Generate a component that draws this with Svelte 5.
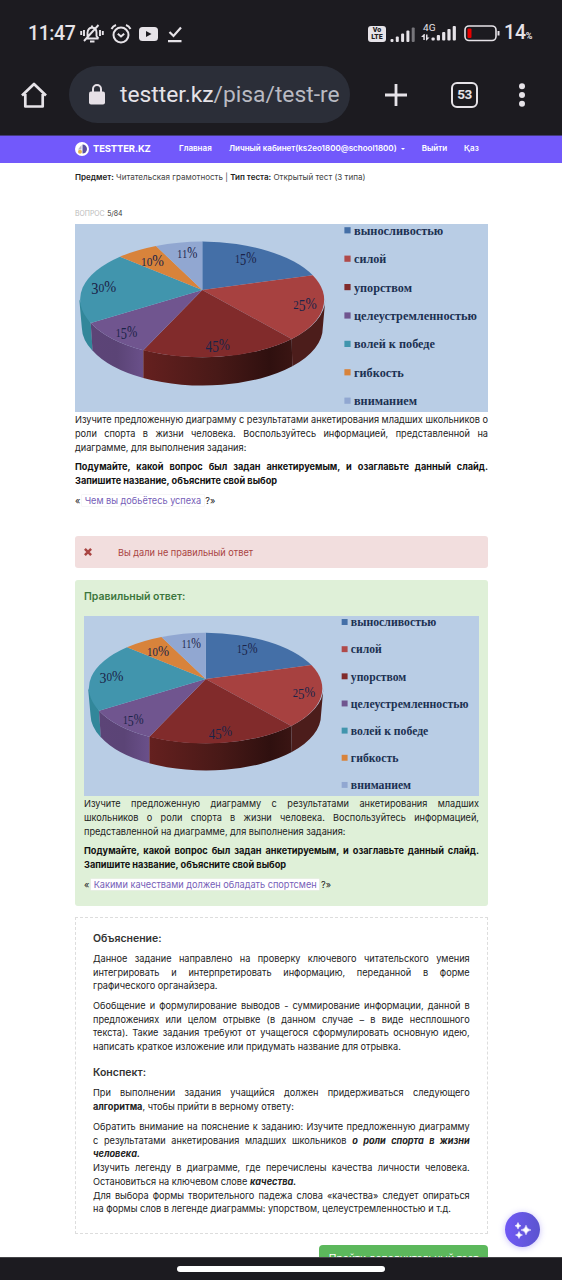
<script>
  const slices = [
    { d: 'M127.3 66V17.6A123 58 0 0 1 237.7 51.3Z', fill: '#446fa7' },
    { d: 'M127.3 66L237.7 51.3A123 58 0 0 1 216.7 115Z', fill: '#a74140' },
    { d: 'M127.3 66L216.7 115A123 58 0 0 1 68.3 126.3Z', fill: '#812b2b' },
    { d: 'M127.3 66L68.3 126.3A123 58 0 0 1 15.7 99Z', fill: '#70558f' },
    { d: 'M127.3 66L15.7 99A123 58 0 0 1 45 32.7Z', fill: '#4195ad' },
    { d: 'M127.3 66L45 32.7A123 58 0 0 1 81 22Z', fill: '#d8833b' },
    { d: 'M127.3 66L81 22A123 58 0 0 1 127.3 17.6Z', fill: '#91a7d1' }
  ];
  const shares = [
    { t: '15', x: 160, y: 38.7, w: 21.5 },
    { t: '25', x: 218.3, y: 84.7, w: 23.5 },
    { t: '45', x: 130.5, y: 126, w: 24.5 },
    { t: '15', x: 40.7, y: 112.7, w: 21.5 },
    { t: '30', x: 16.3, y: 67.7, w: 25 },
    { t: '10', x: 66, y: 41.7, w: 23 },
    { t: '11', x: 102.3, y: 34, w: 20 }
  ];
  const legend = [
    { t: 'выносливостью', w: 89.3, c: '#446fa7' },
    { t: 'силой', w: 32.3, c: '#b04a4a' },
    { t: 'упорством', w: 58, c: '#812b2b' },
    { t: 'целеустремленностью', w: 123, c: '#70558f' },
    { t: 'волей к победе', w: 81, c: '#4195ad' },
    { t: 'гибкость', w: 49.7, c: '#d8833b' },
    { t: 'вниманием', w: 63, c: '#91a7d1' }
  ];
  // Old-style figures: 0-2 sit at x-height, 3-5 hang under the baseline.
  const low = (c) => '345'.includes(c);
  const drop = (t, i) => (low(t[i]) ? 2.5 : 0) - (i > 0 && low(t[i - 1]) ? 2.5 : 0);
  const bars = [3, 5.5, 8.5, 11.5, 14.5];
</script>

{#snippet chart()}
  <svg class="chart" viewBox="0 0 413 188.6" preserveAspectRatio="none">
    <defs>
      <linearGradient id="side" x1="68" x2="217" y1="0" y2="0" gradientUnits="userSpaceOnUse">
        <stop offset="0" stop-color="#65201f" /><stop offset=".5" stop-color="#481917" /><stop offset=".85" stop-color="#2f100f" /><stop offset="1" stop-color="#3a1513" />
      </linearGradient>
      <linearGradient id="violet"><stop offset="0" stop-color="#5c4477" /><stop offset=".5" stop-color="#5b4476" /><stop offset="1" stop-color="#6a508a" /></linearGradient>
    </defs>
    <rect width="413" height="188.6" fill="#b9cde5" />
    <path d="M4.3 75.6L6.8 103.5A120.4 58 0 0 0 17.7 127L15.7 99Z" fill="#32879a" />
    <path d="M15.7 99L17.5 126.5A120.4 58 0 0 0 68.3 154V126.3A123 58 0 0 1 15.7 99Z" fill="url(#violet)" />
    <path d="M68.3 126V154A120.4 58 0 0 0 217.3 142.3L216.7 115A123 58 0 0 1 68.3 126Z" fill="url(#side)" />
    <path d="M216.7 115L217.3 142.3A120.4 58 0 0 0 247.8 103.5L250.3 75.6A123 58 0 0 1 216.7 115Z" fill="#4c1d1b" />
    {#each slices as s}<path d={s.d} fill={s.fill} />{/each}
    {#each shares as s}
      <text class="share" x={s.x} y={s.y} textLength={s.w} lengthAdjust="spacingAndGlyphs"><tspan dy={drop(s.t, 0)} class:small={!low(s.t[0])}>{s.t[0]}</tspan><tspan dy={drop(s.t, 1)} class:small={!low(s.t[1])}>{s.t[1]}</tspan><tspan dy={low(s.t[1]) ? -2.5 : 0}>%</tspan></text>
    {/each}
    {#each legend as l, i}
      <rect x="269.4" y={3.2 + i * 28.4} width="6.2" height="6.2" fill={l.c} />
      <text class="leg" x="279" y={10.8 + i * 28.4} textLength={l.w} lengthAdjust="spacingAndGlyphs">{l.t}</text>
    {/each}
  </svg>
{/snippet}

<div class="screen">
  <header class="phone">
    <div class="status">
      <span class="time">11:47</span>
      <svg class="bell" width="24" height="20" viewBox="0 0 24 20" fill="none" stroke="#e6e3e8" stroke-width="1.9">
        <path d="M6 14.5H18.5M7.5 14V8.5Q8 4 12 3.5Q16.500 4 16.500 8.500V12L18.500 14.500M12 3.500V1.500M10 17.500H14.500M4 17L18.500 1M4 6V12M1.200 7V11M20 6V12M22.800 7V11" />
      </svg>
      <svg class="alarm" width="22" height="20" viewBox="0 0 22 20" fill="none" stroke="#e6e3e8" stroke-width="2">
        <circle cx="11" cy="11" r="7.5" /><path d="M1.500 5Q3 2 6 1M20.500 5Q19 2 16 1M7.800 9.800L11 12.500L14.200 9.800" />
      </svg>
      <svg class="tube" width="19" height="14" viewBox="0 0 19 14"><rect width="19" height="14" rx="3.500" fill="#e6e3e8" /><path d="M7 4L12.500 7L7 10Z" fill="#1c1b20" /></svg>
      <svg class="done" width="14" height="17" viewBox="0 0 14 17" fill="none" stroke="#e6e3e8" stroke-width="2.200"><path d="M1.500 6L5.500 10L13 1.500M0 15.200H13.500" /></svg>
      <span class="gap"></span>
      <span class="volte"><b>Vo</b><b>LTE</b></span>
      <svg class="sig" width="25" height="17" viewBox="0 0 25 17">
        {#each bars as h, i}<rect x={0.5 + i * 5.3} y={16 - h} width="3" height={h} rx="1" fill={i === 4 ? '#77767b' : '#e6e3e8'} />{/each}
      </svg>
      <svg class="net" width="36" height="20" viewBox="0 0 36 20" fill="#e6e3e8">
        <text x="2" y="8.200" textLength="12.500" lengthAdjust="spacingAndGlyphs">4G</text>
        <path d="M3 11L0 14H2.300V17H3.800V11ZM5.500 17.500L8.500 14.500H6.500V11.500H5V17.500Z" />
        {#each bars as h, i}<rect x={10.5 + i * 5.3} y={17.5 - h} width="3.200" height={h} rx="1" />{/each}
      </svg>
      <svg class="batt" width="36" height="17" viewBox="0 0 36 17"><rect x="1" y="1" width="31" height="14.500" rx="4" fill="none" stroke="#e6e3e8" stroke-width="1.600" /><rect x="3.500" y="3.500" width="4" height="9.500" rx="1" fill="#e80000" /><path d="M34.500 6V10.500" stroke="#e6e3e8" stroke-width="2" /></svg>
      <span class="pct">14<small>%</small></span>
    </div>
    <div class="tools">
      <svg class="home" width="28" height="28" viewBox="0 0 28 28" fill="none" stroke="#e6e3e8" stroke-width="2.700"><path d="M2 14.500L14 3L26 14.500M5.300 13V25.500H22.700V13" stroke-linejoin="round" /></svg>
      <div class="url">
        <svg width="16" height="21" viewBox="0 0 16 21"><rect y="7.500" width="16" height="13" rx="2" fill="#e6e0e6" /><path d="M4 8V5a4 4 0 0 1 8 0V8" fill="none" stroke="#e6e0e6" stroke-width="2" /></svg>
        <span>testter.kz<i>/pisa/test-re</i></span>
      </div>
      <svg class="plus" width="24" height="24" viewBox="0 0 24 24" stroke="#e6e3e8" stroke-width="2.800"><path d="M12 1V23M1 12H23" /></svg>
      <span class="tabs">53</span>
      <svg class="dots" width="8" height="24" viewBox="0 0 8 24" fill="#e6e3e8"><circle cx="4" cy="3.200" r="3" /><circle cx="4" cy="12" r="3" /><circle cx="4" cy="20.800" r="3" /></svg>
    </div>
  </header>

  <nav>
    <svg width="14" height="14" viewBox="0 0 14 14"><circle cx="7" cy="7" r="7" fill="#fff" /><path d="M7.500 2.500A4.500 4.500 0 0 1 7.500 11.500Z" fill="#5c50a4" /><path d="M6.500 3L3 7.500H6.500Z" fill="#b9b4c6" /><circle cx="5" cy="9.700" r="2" fill="#e5b54d" /></svg>
    <strong>TESTTER.KZ</strong>
    <span class="n1">Главная</span>
    <span class="n2">Личный кабинет(ks2eo1800@school1800)</span>
    <i class="caret"></i>
    <span class="n3">Выйти</span>
    <span class="n4">Қаз</span>
  </nav>

  <main>
    <p class="meta"><b>Предмет:</b> Читательская грамотность | <b>Тип теста:</b> Открытый тест (3 типа)</p>
    <p class="num"><span>ВОПРОС</span> 5/84</p>
    {@render chart()}
    <div class="text">
      <p><span class="j">Изучите предложенную диаграмму с результатами анкетирования младших школьников о</span><span class="j">роли спорта в жизни человека. Воспользуйтесь информацией, представленной на</span><span class="l">диаграмме, для выполнения задания:</span></p>
      <p class="bold"><span class="j">Подумайте, какой вопрос был задан анкетируемым, и озаглавьте данный слайд.</span><span class="l">Запишите название, объясните свой выбор</span></p>
      <p class="fill">« <em>Чем вы добьётесь успеха</em> ?»</p>
    </div>

    <div class="wrong">
      <svg width="8" height="8" viewBox="0 0 8 8" stroke="#a94442" stroke-width="2.500"><path d="M.9 .9L7.100 7.100M7.100 .9L.9 7.100" /></svg>
      <span>Вы дали не правильный ответ</span>
    </div>

    <section class="right">
      <h3>Правильный ответ:</h3>
      {@render chart()}
      <div class="text">
        <p><span class="j">Изучите предложенную диаграмму с результатами анкетирования младших</span><span class="j">школьников о роли спорта в жизни человека. Воспользуйтесь информацией,</span><span class="l">представленной на диаграмме, для выполнения задания:</span></p>
        <p class="bold"><span class="j">Подумайте, какой вопрос был задан анкетируемым, и озаглавьте данный слайд.</span><span class="l">Запишите название, объясните свой выбор</span></p>
        <p class="fill">« <em>Какими качествами должен обладать спортсмен</em> ?»</p>
      </div>
    </section>

    <section class="notes">
      <h4>Объяснение:</h4>
      <p><span class="j">Данное задание направлено на проверку ключевого читательского умения</span><span class="j">интегрировать и интерпретировать информацию, переданной в форме</span><span class="l">графического органайзера.</span></p>
      <p><span class="j">Обобщение и формулирование выводов - суммирование информации, данной в</span><span class="j">предложениях или целом отрывке (в данном случае – в виде несплошного</span><span class="j">текста). Такие задания требуют от учащегося сформулировать основную идею,</span><span class="l">написать краткое изложение или придумать название для отрывка.</span></p>
      <h4 class="second">Конспект:</h4>
      <p><span class="j">При выполнении задания учащийся должен придерживаться следующего</span><span class="l"><b>алгоритма</b>, чтобы прийти в верному ответу:</span></p>
      <p><span class="j">Обратить внимание на пояснение к заданию: Изучите предложенную диаграмму</span><span class="j">с результатами анкетирования младших школьников <b class="it">о роли спорта в жизни</b></span><span class="l"><b class="it">человека.</b></span><span class="j">Изучить легенду в диаграмме, где перечислены качества личности человека.</span><span class="l">Остановиться на ключевом слове <b class="it">качества.</b></span><span class="j">Для выбора формы творительного падежа слова «качества» следует опираться</span><span class="l">на формы слов в легенде диаграммы: упорством, целеустремленностью и т.д.</span></p>
    </section>
    <button>Пройти дополнительный тест</button>
  </main>

  <div class="fab"><svg width="18" height="18" viewBox="0 0 18 18" fill="#fff"><path d="M12 4.200Q12.700 8.300 17 9Q12.700 9.700 12 13.800Q11.300 9.700 7 9Q11.300 8.300 12 4.200ZM4 1.500Q4.500 4.300 7 4.800Q4.500 5.300 4 8.100Q3.500 5.300 1 4.800Q3.500 4.300 4 1.500ZM5 10.500Q5.500 13.500 8.500 14Q5.500 14.500 5 17.500Q4.500 14.500 1.500 14Q4.500 13.500 5 10.500Z" stroke="#fff" stroke-width=".5" /></svg></div>
  <footer><span></span></footer>
</div>

<style>
  :global(body) { margin: 0; background: #fff; }
  .screen { position: relative; width: 562px; height: 1280px; overflow: hidden; background: #fff; font-family: Inter, "Noto Sans", sans-serif; font-size: 9.18px; line-height: 13.75px; color: #222; display: flex; flex-direction: column; box-sizing: border-box; }
  .phone { height: 135px; background: #1c1b20; font-family: Roboto, sans-serif; letter-spacing: 0; color: #e6e3e8; flex: none; border-bottom: 1px solid #433a7d; box-sizing: content-box; }
  .status { display: flex; align-items: center; height: 24px; padding: 22px 27px 0 28px; }
  .time { font-size: 19.500px; width: 52px; letter-spacing: -.4px; white-space: nowrap; font-weight: 500; line-height: 24px; }
  .alarm { margin-left: 6px; }
  .tube { margin-left: 7px; }
  .done { margin-left: 10px; }
  .gap { flex: 1; }
  .volte { width: 18px; height: 16px; border-radius: 3px; background: #e6e3e8; color: #1c1b20; display: flex; flex-direction: column; align-items: center; justify-content: center; font: 900 7px/6.5px Roboto, sans-serif; margin-top: -1px; }
  .volte b { font-weight: 900; }
  .sig { margin-left: 4px; }
  .net { margin-left: 6px; overflow: visible; margin-top: -2px; }
  .net text { font: 9.500px Roboto, sans-serif; }
  .batt { margin-left: 7px; margin-top: -1px; }
  .pct { font-size: 19.500px; line-height: 24px; font-weight: 500; margin-left: 4px; width: 31px; letter-spacing: -.2px; white-space: nowrap; }
  .pct small { font-size: 9px; font-weight: 700; }
  .tools { display: flex; align-items: center; height: 57px; padding: 20px 36px 0 20px; }
  .url { margin-left: 21px; width: 281px; height: 57px; border-radius: 29px; background: #2b2e38; box-sizing: border-box; padding-left: 20px; display: flex; align-items: center; flex: none; }
  .url svg { flex: none; }
  .url span { font-size: 22.800px; line-height: 30px; margin-left: 15px; white-space: nowrap; }
  .url i { font-style: normal; color: #b9bac2; }
  .plus { margin-left: 34px; }
  .tabs { margin-left: 43px; width: 27px; height: 26px; box-sizing: border-box; border: 2.500px solid #e6e3e8; border-radius: 6px; font-size: 13.500px; font-weight: 700; line-height: 21px; text-align: center; letter-spacing: -.5px; }
  .dots { margin-left: auto; }
  nav { height: 27px; flex: none; background: #7259fb; color: #fff; display: flex; align-items: center; padding: 0 0 2px 75px; box-sizing: border-box; font-size: 8.020px; font-weight: 600; white-space: nowrap; }
  nav svg { margin-top: 1px; }
  nav strong { font-size: 9.450px; letter-spacing: -.12px; font-weight: 700; margin-left: 4px; width: 86px; margin-top: 1px; }
  .n1 { width: 50px; }
  .caret { border: 2px solid transparent; border-top-color: #fff; border-bottom: 0; margin: 1px 0 0 4px; }
  .n3 { margin-left: 17px; }
  .n4 { margin-left: 17px; }
  main { width: 413px; margin-left: 75px; }
  p { margin: 0 0 5.900px; }
  .meta { font-size: 8.060px; margin: 7.600px 0 0; color: #444; white-space: nowrap; }
  .meta b { color: #222; font-weight: 600; }
  .num { font-size: 6.900px; letter-spacing: 0; margin: 23px 0 2.600px; color: #333; }
  .num span { color: #bbb; margin-right: .6px; }
  .chart { display: block; width: 413px; height: 188.600px; letter-spacing: 0; }
  .share { font: 16px "Liberation Serif", serif; fill: #1b2348; }
  .small { font-size: 13px; }
  .leg { font: bold 12px "Liberation Serif", serif; fill: #1c3152; }
  .text { padding-top: .900px; }
  .j, .l { display: block; white-space: nowrap; }
  .j { text-align: justify; text-align-last: justify; white-space: normal; }
  .bold { font-weight: 700; color: #111; }
  .fill em { font-style: normal; color: #7660b8; background: #fff; padding: 0 2.500px; margin: 0 -.800px; box-shadow: 0 0 0 .5px #eee; }
  .wrong { margin-top: 29px; height: 32px; border-radius: 3px; background: #f2dede; color: #a94442; display: flex; align-items: center; padding-left: 9px; box-sizing: border-box; }
  .wrong span { margin-left: 26px; }
  .right { margin-top: 11.500px; height: 326.500px; box-sizing: border-box; border-radius: 3px; background: #dff0d8; padding: 10.500px 9px 0; }
  .right .chart { width: 395px; height: 180.300px; }
  h3 { margin: 0 0 11.700px; font-size: 10.500px; letter-spacing: 0; font-weight: 600; color: #3c763d; }
  .notes { margin-top: 11px; height: 317px; box-sizing: border-box; border: 1px dashed #ddd; padding: 13.300px 17.300px 0 17px; }
  h4 { margin: 0 0 6.300px; font-size: 10.500px; letter-spacing: 0; font-weight: 600; color: #333; }
  .second { margin-top: 12.500px; }
  .it { font-style: italic; }
  button { display: block; margin: 11px 0 0 auto; width: 169px; height: 26px; border: 0; border-radius: 4px; background: #5cb85c; color: #fff; font: 10.300px/25px Inter, sans-serif; padding: 0; white-space: nowrap; }
  .fab { position: absolute; left: 505px; top: 1212px; width: 35px; height: 35px; border-radius: 50%; background: linear-gradient(90deg, #7059f5, #5b54cf); box-shadow: 0 1px 6px #7059f560; display: flex; align-items: center; justify-content: center; }
  footer { position: absolute; left: 0; right: 0; bottom: 0; height: 23px; box-sizing: border-box; border-top: 1px solid #444448; background: #1c1b20; display: flex; align-items: center; justify-content: center; }
  footer span { width: 208px; height: 6px; border-radius: 3px; background: #fff; }
</style>
